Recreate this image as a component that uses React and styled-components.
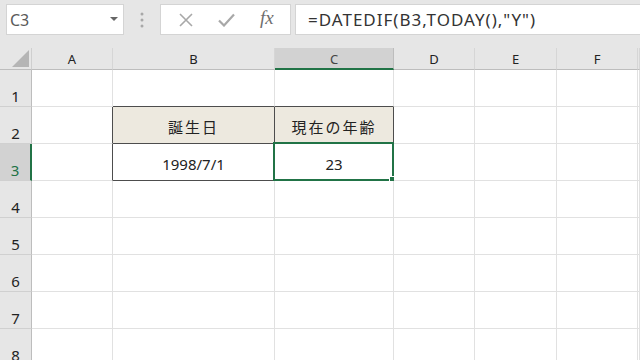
import React from 'react'
import styled, { createGlobalStyle } from 'styled-components'

const GlobalStyle = createGlobalStyle`
  html, body { margin: 0; padding: 0; background: #ffffff; overflow: hidden; }
  body { font-family: "Noto Sans", "Noto Sans CJK JP", sans-serif; }
`

const Screen = styled.div`
  width: 640px;
  height: 360px;
  overflow: hidden;
  background: #e6e6e6;
  display: flex;
  flex-direction: column;
`

/* ── formula bar ── */
const Toolbar = styled.div`
  flex-shrink: 0;
  display: flex;
  align-items: stretch;
  height: 31px;
  padding: 4px 0 0 6px;
  margin-bottom: 13px;
`

const NameBox = styled.div`
  width: 118px;
  border: 1px solid #d4d4d4;
  background: #fff;
  display: flex;
  align-items: center;
  justify-content: space-between;
  padding: 0 5px 0 3px;
  box-sizing: border-box;
  font-family: "Noto Sans", sans-serif;
  font-size: 16px;
  color: #5a5a5a;
`

const Caret = styled.span`
  width: 0;
  height: 0;
  border-left: 4px solid transparent;
  border-right: 4px solid transparent;
  border-top: 4px solid #666;
  margin-top: -2px;
`

const Grip = styled.div`
  width: 36px;
  display: flex;
  justify-content: center;
  align-items: center;
`

const Buttons = styled.div`
  width: 131px;
  border: 1px solid #d4d4d4;
  background: #fff;
  box-sizing: border-box;
  display: flex;
  align-items: center;
  justify-content: space-around;
  padding: 0 4px 0 6px;
`

const Fx = styled.span`
  font-family: "Liberation Serif", serif;
  font-style: italic;
  font-size: 19px;
  color: #6e6e6e;
  margin-top: -3px;
`

const Formula = styled.div`
  flex: 1;
  margin-left: 4px;
  border: 1px solid #d4d4d4;
  border-right: none;
  background: #fff;
  display: flex;
  align-items: center;
  padding-left: 12px;
  font-family: "Noto Sans", sans-serif;
  font-size: 17px;
  letter-spacing: 1px;
  color: #333;
`

/* ── sheet grid ── */
const Sheet = styled.div`
  flex: 1;
  min-height: 0;
  overflow: hidden;
  display: grid;
  grid-template-columns: 32px 81px 162px 119px 81px 82px 81px 1fr;
  grid-template-rows: 22px repeat(8, 37px);
  background: #fff;
`

const Corner = styled.div`
  background: #e6e6e6;
  border-right: 1px solid #cfcfcf;
  border-bottom: 1px solid #bdbdbd;
  position: relative;
  &::after {
    content: '';
    position: absolute;
    right: 2px;
    bottom: 2px;
    width: 0;
    height: 0;
    border-left: 17px solid transparent;
    border-bottom: 17px solid #b5b5b5;
  }
`

const ColHead = styled.div`
  background: ${({ $sel }) => ($sel ? '#d2d2d2' : '#e6e6e6')};
  border-right: 1px solid ${({ $sel }) => ($sel ? '#bdbdbd' : '#d6d6d6')};
  border-bottom: ${({ $sel }) => ($sel ? '2px solid #217346' : '1px solid #bdbdbd')};
  display: flex;
  align-items: center;
  justify-content: center;
  font-family: "Noto Sans", sans-serif;
  font-size: 13px;
  color: ${({ $sel }) => ($sel ? '#444' : '#222')};
  padding-top: 1px;
`

const RowHead = styled.div`
  background: ${({ $sel }) => ($sel ? '#d2d2d2' : '#e6e6e6')};
  border-right: ${({ $sel }) => ($sel ? '2px solid #217346' : '1px solid #bdbdbd')};
  border-bottom: 1px solid #d0d0d0;
  display: flex;
  align-items: flex-end;
  justify-content: center;
  padding-bottom: 0;
  box-sizing: border-box;
  font-family: "Noto Sans", sans-serif;
  font-size: 15px;
  color: ${({ $sel }) => ($sel ? '#217346' : '#222')};
`

const Cell = styled.div`
  position: relative;
  background: ${({ $bg }) => $bg || '#fff'};
  border-right: 1px solid ${({ $r }) => ($r ? '#4d4d4d' : '#e1e1e1')};
  border-bottom: 1px solid ${({ $b }) => ($b ? '#4d4d4d' : '#e1e1e1')};
  display: flex;
  align-items: flex-end;
  justify-content: center;
  padding-bottom: 6px;
  box-sizing: border-box;
  font-family: "Noto Sans", "Noto Sans CJK JP", sans-serif;
  font-size: 15px;
  color: #222;

  ${({ $active }) =>
    $active &&
    `
    &::before {
      content: '';
      position: absolute;
      top: -2px;
      left: -2px;
      right: -1px;
      bottom: -1px;
      border: 2px solid #217346;
      pointer-events: none;
    }
    &::after {
      content: '';
      position: absolute;
      right: -3px;
      bottom: -3px;
      width: 5px;
      height: 5px;
      background: #217346;
      border: 1px solid #fff;
    }
  `}
`

const COLS = ['A', 'B', 'C', 'D', 'E', 'F', '']
const HEAD_BG = '#ede9df'

// content + border flags keyed by "col row"
const CELLS = {
  A2: { r: true },
  A3: { r: true },
  B1: { b: true },
  C1: { b: true },
  B2: { text: '誕生日', bg: HEAD_BG, r: true, b: true, jp: true },
  C2: { text: '現在の年齢', bg: HEAD_BG, r: true, b: true, jp: true },
  B3: { text: '1998/7/1', r: true, b: true },
  C3: { text: '23', r: true, b: true, active: true },
}

const JpText = styled.span`
  letter-spacing: 2px;
  font-size: 15px;
`

const Dots = () => (
  <svg width="4" height="16" viewBox="0 0 4 16">
    <circle cx="2" cy="2" r="1.5" fill="#a8a8a8" />
    <circle cx="2" cy="8" r="1.5" fill="#a8a8a8" />
    <circle cx="2" cy="14" r="1.5" fill="#a8a8a8" />
  </svg>
)

const Cross = () => (
  <svg width="14" height="14" viewBox="0 0 14 14">
    <path d="M1 1 L13 13 M13 1 L1 13" stroke="#a8a8a8" strokeWidth="1.6" fill="none" />
  </svg>
)

const Check = () => (
  <svg width="17" height="14" viewBox="0 0 17 14">
    <path d="M1 7.5 L6 12.5 L16 1.5" stroke="#a8a8a8" strokeWidth="2.2" fill="none" />
  </svg>
)

export default function App() {
  const rows = [1, 2, 3, 4, 5, 6, 7, 8]
  return (
    <Screen>
      <GlobalStyle />
      <Toolbar>
        <NameBox>
          <span>C3</span>
          <Caret />
        </NameBox>
        <Grip>
          <Dots />
        </Grip>
        <Buttons>
          <Cross />
          <Check />
          <Fx>fx</Fx>
        </Buttons>
        <Formula>=DATEDIF(B3,TODAY(),"Y")</Formula>
      </Toolbar>

      <Sheet>
        <Corner />
        {COLS.map((c, i) => (
          <ColHead key={i} $sel={c === 'C'}>{c}</ColHead>
        ))}
        {rows.map((r) => (
          <React.Fragment key={r}>
            <RowHead $sel={r === 3}>{r}</RowHead>
            {COLS.map((c, i) => {
              const cell = CELLS[c + r] || {}
              return (
                <Cell key={i} $bg={cell.bg} $r={cell.r} $b={cell.b} $active={cell.active}>
                  {cell.jp ? <JpText>{cell.text}</JpText> : cell.text}
                </Cell>
              )
            })}
          </React.Fragment>
        ))}
      </Sheet>
    </Screen>
  )
}
